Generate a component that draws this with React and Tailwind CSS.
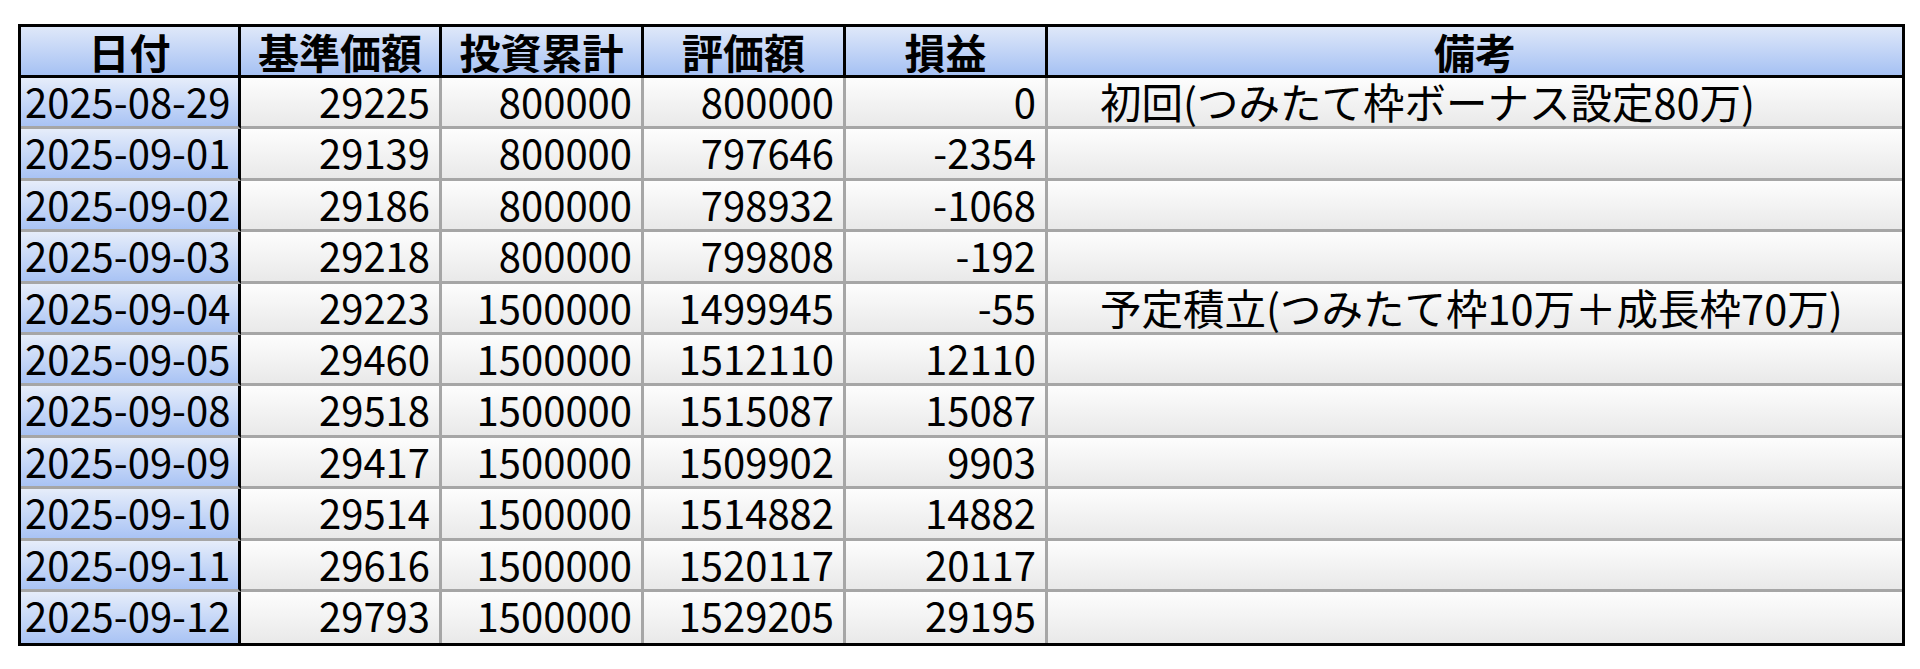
import React from 'react';

const rows = [
  ['2025-08-29', '29225', '800000', '800000', '0', '初回(つみたて枠ボーナス設定80万)'],
  ['2025-09-01', '29139', '800000', '797646', '-2354', ''],
  ['2025-09-02', '29186', '800000', '798932', '-1068', ''],
  ['2025-09-03', '29218', '800000', '799808', '-192', ''],
  ['2025-09-04', '29223', '1500000', '1499945', '-55', '予定積立(つみたて枠10万＋成長枠70万)'],
  ['2025-09-05', '29460', '1500000', '1512110', '12110', ''],
  ['2025-09-08', '29518', '1500000', '1515087', '15087', ''],
  ['2025-09-09', '29417', '1500000', '1509902', '9903', ''],
  ['2025-09-10', '29514', '1500000', '1514882', '14882', ''],
  ['2025-09-11', '29616', '1500000', '1520117', '20117', ''],
  ['2025-09-12', '29793', '1500000', '1529205', '29195', ''],
];

const headers = ['日付', '基準価額', '投資累計', '評価額', '損益', '備考'];

const font = { fontFamily: '"Noto Sans CJK JP", "Noto Sans", sans-serif' };

export default function App() {
  return (
    <div className="w-[1920px] h-[669px] bg-white pl-[18px] pt-[24px]" style={font}>
      <div className="w-[1887px] border-[3px] border-black grid grid-cols-[220px_201px_202px_202px_202px_1fr] text-black">
        {/* header */}
        {headers.map((h, i) => (
          <div
            key={h}
            className={
              'h-[51px] border-b-[3px] border-black bg-gradient-to-b from-[#dfe8f9] to-[#a6c1f3] flex items-center justify-center text-[41px] font-bold leading-[48px] ' +
              (i < 5 ? 'border-r-[3px]' : '')
            }
          >
            {h}
          </div>
        ))}

        {/* body */}
        {rows.map((r, ri) => {
          const last = ri === rows.length - 1;
          return r.map((c, ci) => {
            let cls = 'h-[51.4px] leading-[46px] whitespace-nowrap ';
            if (!last) cls += 'border-b-[3px] border-b-[#a6a6a6] ';
            if (ci === 0) {
              cls += 'text-[40px] border-r-[3px] border-r-black bg-gradient-to-b from-[#e6edfa] to-[#a9c3f4] pl-[4px] ';
            } else if (ci < 5) {
              cls += 'text-[40px] bg-gradient-to-b from-[#fdfdfd] to-[#e9e9e9] border-r-[3px] border-r-[#a6a6a6] text-right pr-[9px] ';
            } else {
              cls += 'text-[41.5px] bg-gradient-to-b from-[#fdfdfd] to-[#e9e9e9] pl-[52px] ';
            }
            return (
              <div key={ri + '-' + ci} className={cls}>
                {c}
              </div>
            );
          });
        })}
      </div>
    </div>
  );
}
